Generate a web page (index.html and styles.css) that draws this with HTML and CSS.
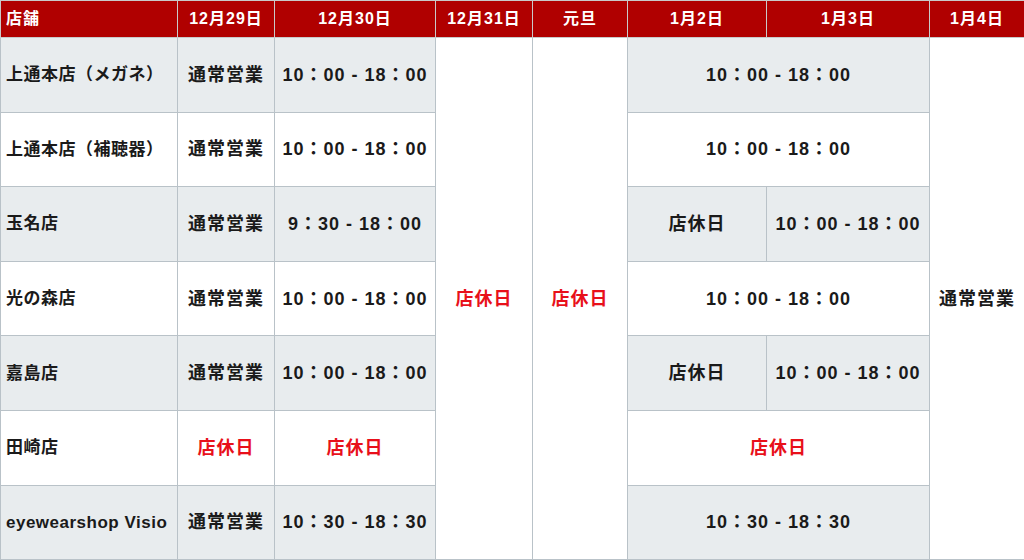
FILE: index.html
```html
<!DOCTYPE html>
<html lang="ja">
<head>
<meta charset="utf-8">
<title>年末年始の営業時間</title>
<link rel="stylesheet" href="styles.css">
</head>
<body>
<table class="hours">
  <colgroup>
    <col class="c-store"><col class="c-29"><col class="c-30"><col class="c-31"><col class="c-ny"><col class="c-2"><col class="c-3"><col class="c-4">
  </colgroup>
  <thead>
    <tr class="head">
      <th class="store">店舗</th><th>12月29日</th><th>12月30日</th><th>12月31日</th><th>元旦</th><th>1月2日</th><th>1月3日</th><th>1月4日</th>
    </tr>
  </thead>
  <tbody>
    <tr class="alt">
      <td class="store">上通本店（メガネ）</td><td>通常営業</td><td>10：00 - 18：00</td>
      <td rowspan="7" class="closed plain">店休日</td><td rowspan="7" class="closed plain">店休日</td>
      <td colspan="2">10：00 - 18：00</td>
      <td rowspan="7" class="plain">通常営業</td>
    </tr>
    <tr>
      <td class="store">上通本店（補聴器）</td><td>通常営業</td><td>10：00 - 18：00</td><td colspan="2">10：00 - 18：00</td>
    </tr>
    <tr class="alt">
      <td class="store">玉名店</td><td>通常営業</td><td>9：30 - 18：00</td><td>店休日</td><td>10：00 - 18：00</td>
    </tr>
    <tr>
      <td class="store">光の森店</td><td>通常営業</td><td>10：00 - 18：00</td><td colspan="2">10：00 - 18：00</td>
    </tr>
    <tr class="alt">
      <td class="store">嘉島店</td><td>通常営業</td><td>10：00 - 18：00</td><td>店休日</td><td>10：00 - 18：00</td>
    </tr>
    <tr>
      <td class="store">田崎店</td><td class="closed">店休日</td><td class="closed">店休日</td><td colspan="2" class="closed">店休日</td>
    </tr>
    <tr class="alt">
      <td class="store">eyewearshop Visio</td><td>通常営業</td><td>10：30 - 18：30</td><td colspan="2">10：30 - 18：30</td>
    </tr>
  </tbody>
</table>
</body>
</html>
```
FILE: styles.css
```css
html, body {
  margin: 0;
  padding: 0;
  background: #ffffff;
}
body {
  font-family: "Liberation Sans", "Noto Sans CJK JP", sans-serif;
  color: #1a1a1a;
  width: 1024px;
  height: 560px;
  overflow: hidden;
}
.hours {
  width: 1024px;
  table-layout: fixed;
  border-collapse: collapse;
}
.c-store { width: 177px; }
.c-29 { width: 97px; }
.c-30 { width: 161px; }
.c-31 { width: 97px; }
.c-ny { width: 95px; }
.c-2 { width: 139px; }
.c-3 { width: 163px; }
.c-4 { width: 95px; }
.hours th, .hours td {
  border: 1px solid #b9c2c8;
  text-align: center;
  vertical-align: middle;
  padding: 0;
  font-weight: 700;
  white-space: nowrap;
}
.head th {
  background: #b00000;
  color: #ffffff;
  font-size: 16px;
  letter-spacing: 1px;
  height: 36px;
  border-color: #c9c9c9;
  line-height: 1;
}
.hours td {
  height: 73.6px;
  font-size: 18px;
  letter-spacing: 1px;
  line-height: 1;
}
.hours td.store {
  text-align: left;
  padding-left: 5px;
  font-size: 17px;
  letter-spacing: 0.5px;
}
.hours th.store {
  text-align: left;
  padding-left: 5px;
}
.alt td {
  background: #e8ecee;
}
.alt td.plain {
  background: #ffffff;
}
.closed {
  color: #e8101a;
}
```
